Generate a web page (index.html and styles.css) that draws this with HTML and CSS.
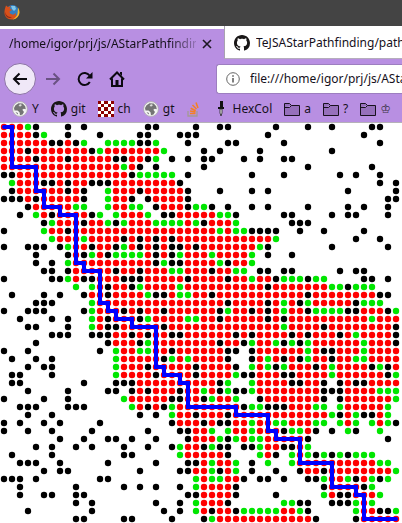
FILE: index.html
```
<!DOCTYPE html>
<html lang="en">
<head>
<meta charset="utf-8">
<title>AStarPathfinding</title>
<link rel="stylesheet" href="styles.css">
</head>
<body>
<svg class="defs" aria-hidden="true">
  <symbol id="github" viewBox="0 0 16 16">
    <path fill="#191717" d="M8 0C3.58 0 0 3.58 0 8c0 3.54 2.29 6.53 5.47 7.59.4.07.55-.17.55-.38 0-.19-.01-.82-.01-1.49-2.01.37-2.53-.49-2.69-.94-.09-.23-.48-.94-.82-1.13-.28-.15-.68-.52-.01-.53.63-.01 1.08.58 1.23.82.72 1.21 1.87.87 2.33.66.07-.52.28-.87.51-1.07-1.78-.2-3.64-.89-3.64-3.95 0-.87.31-1.59.82-2.15-.08-.2-.36-1.02.08-2.12 0 0 .67-.21 2.2.82.64-.18 1.32-.27 2-.27s1.36.09 2 .27c1.53-1.04 2.2-.82 2.2-.82.44 1.1.16 1.92.08 2.12.51.56.82 1.27.82 2.15 0 3.07-1.87 3.75-3.65 3.95.29.25.54.73.54 1.48 0 1.07-.01 1.93-.01 2.2 0 .21.15.46.55.38A8.01 8.01 0 0 0 16 8c0-4.42-3.58-8-8-8z"/>
  </symbol>
  <symbol id="globe" viewBox="0 0 16 16">
    <circle cx="8" cy="8" r="7.4" fill="#f4f4f4" stroke="#aaa" stroke-width=".8"/>
    <path fill="#747474" d="M2 7 3.500 4.200l3-2 4.200.3 2.500 2.700.6 3-2-.5-1.500 1L12 11l-1.500 2.500-2.500.8-.5-3L5.500 9.500 2.500 9.500zM3.500 11l2.500 1-.5 1.500z"/>
    <path fill="#ddd" d="M8 3l2 1-1.500 1.500L6.500 5z"/>
  </symbol>
  <symbol id="folder" viewBox="0 0 16 16">
    <path fill="#9670bb" stroke="#17111d" d="M.5 14.500V2.500h5l2 2h8v10zM.5 6.500h5l2-2"/>
  </symbol>
</svg>
<header class="browser">
  <div class="titlebar">
    <svg width="16" height="16" viewBox="0 0 16 16" aria-hidden="true">
      <circle cx="8.500" cy="7.500" r="6.500" fill="#347fc0"/>
      <path fill="#7fc6e8" d="M7 2l4 0 1 3-2 2-2-2z"/>
      <path fill="#d8501a" d="M2 1.500 4 3l3-1-1.500 2.500L8 6 5.500 7.500 6 9.500l3 1.200 3-1.700-.5 3 2.500-1 1.200-4.500C16 12 12.500 15.500 8 15.500 3 15.500 0 12 .5 7.500.7 5 1.300 3.500 2 1.500z"/>
      <path fill="#f5b52c" d="M14 3.500c2 3 2 6.500 0 9-1.500 2-3.500 2.800-5.500 3 3-1.500 5-4 5.200-7z"/>
      <path fill="#8d2c18" d="M1 8c1 4 4 5.500 7 5-3 2.500-7 0-7-5z"/>
    </svg>
  </div>
  <nav class="tabs">
    <div class="tab tab-first">
      <span class="tab-title fade">/home/igor/prj/js/AStarPathfinding</span>
      <button class="close" aria-label="Close tab"><svg width="10" height="10" viewBox="0 0 10 10"><path d="M1 1l8 8M9 1l-8 8" stroke="#1d1723" stroke-width="1.600"/></svg></button>
    </div>
    <div class="tab tab-second">
      <svg width="16" height="16" aria-hidden="true"><use href="#github"/></svg>
      <span class="tab-title">TeJSAStarPathfinding/path</span>
    </div>
  </nav>
  <div class="toolbar">
    <button class="tool back" aria-label="Back"><svg width="16" height="16" viewBox="0 0 16 16"><path d="M15 8H2M7.500 2.500 2 8l5.500 5.500"/></svg></button>
    <button class="tool forward" aria-label="Forward"><svg width="16" height="16" viewBox="0 0 16 16"><path d="M1 8h13M8.500 2.500 14 8l-5.500 5.500"/></svg></button>
    <button class="tool" aria-label="Reload"><svg width="16" height="16" viewBox="0 0 16 16"><path d="M12.800 11A6 6 0 1 1 12.500 4.500"/><path class="solid" d="M15.500 1v6.500H9z"/></svg></button>
    <button class="tool" aria-label="Home"><svg width="16" height="16" viewBox="0 0 16 16"><path d="M1 8.500 8 1.500l7 7M3 7.500V15h10V7.500"/><path class="solid" d="M6.500 9h3v6h-3zM11 1h2v4l-2-2z"/></svg></button>
    <div class="address">
      <svg width="14" height="14" viewBox="0 0 14 14" aria-hidden="true"><circle cx="7" cy="7" r="6.300" fill="none" stroke="#666"/><path d="M7 6v4.500M7 3.200v1.600" stroke="#555" stroke-width="1.500"/></svg>
      <input type="text" aria-label="Address" value="file:///home/igor/prj/js/AStarPathfinding/">
    </div>
  </div>
  <nav class="bookmarks">
    <a href="#"><svg width="16" height="16"><use href="#globe"/></svg>Y</a>
    <a href="#"><svg width="16" height="16"><use href="#github"/></svg>git</a>
    <a href="#"><svg width="16" height="16" viewBox="0 0 5 5" shape-rendering="crispEdges"><path fill="#fff" d="M0 0h5v5H0z"/><path fill="#8b0000" d="M0 0h1v1H0zM2 0h1v1H2zM4 0h1v1H4zM1 1h1v1H1zM3 1h1v1H3zM0 2h1v1H0zM2 2h1v1H2zM4 2h1v1H4zM1 3h1v1H1zM3 3h1v1H3zM0 4h1v1H0zM2 4h1v1H2zM4 4h1v1H4z"/></svg>ch</a>
    <a href="#"><svg width="16" height="16"><use href="#globe"/></svg>gt</a>
    <a href="#" aria-label="Questions"><svg width="14" height="16" viewBox="0 0 14 16"><path fill="none" stroke="#a49a94" stroke-width="1.300" d="M1 10v5h9v-5"/><path stroke="#f48024" stroke-width="1.600" d="M3 12.500h5.500M3 10l5.500 1M3.700 7.200l5 2.500M5.500 4l4 4M9 1.500l2 5.500"/></svg></a>
    <a href="#"><svg width="16" height="16" viewBox="0 0 16 16"><path fill="#111" d="M7 0h3v6h1v2H5V6h2z"/><path fill="#eee" stroke="#222" stroke-width=".8" d="M7 8h2v4l-1 3-1-3z"/></svg>HexCol</a>
    <a href="#"><svg width="16" height="16"><use href="#folder"/></svg>a</a>
    <a href="#"><svg width="16" height="16"><use href="#folder"/></svg>?</a>
    <a href="#"><svg width="16" height="16"><use href="#folder"/></svg><span class="king">♔</span></a>
  </nav>
</header>
<main>
  <svg id="board" class="board" width="400" height="400" viewBox="0 0 50 50" role="img" aria-label="Path found across the grid"></svg>
</main>
<script src="board.js"></script>
</body>
</html>
```
FILE: styles.css
```
* {
  box-sizing: border-box;
}

body {
  margin: 0;
  overflow: hidden;
  background: #fff;
  color: #15101b;
  font: 12px/16px "Noto Sans", "Open Sans", sans-serif;
}

svg {
  display: block;
  flex: none;
}

button {
  padding: 0;
  border: 0;
  background: none;
}

.defs {
  width: 0;
  height: 0;
  position: absolute;
}

.browser {
  background: #b88fe2;
  border-bottom: 1px solid #b5b1b8;
}

.titlebar {
  height: 26px;
  padding: 4px;
  background: #444;
}

.tabs {
  display: flex;
  height: 33px;
}

.tab {
  display: flex;
  align-items: center;
  white-space: nowrap;
  overflow: hidden;
}

.tab-first {
  flex: 0 0 224px;
  gap: 6px;
  padding-left: 9px;
  border-top: 3px solid #fff;
}

.tab-second {
  flex: 1;
  gap: 6px;
  padding: 2px 0 0 9px;
  background: #fff;
  border-left: 1px solid #a9a2b0;
  border-bottom: 1px solid #b5adbc;
}

.tab-title {
  overflow: hidden;
}

.fade {
  width: 187px;
  mask-image: linear-gradient(to right, #000 160px, rgb(0 0 0 / 20%));
}

.toolbar {
  display: flex;
  align-items: center;
  height: 40px;
  padding-left: 4px;
}

.tool {
  display: grid;
  place-items: center;
  width: 32px;
  height: 32px;
}

.tool path {
  fill: none;
  stroke: #0c0910;
  stroke-width: 2;
}

.tool .solid {
  fill: #0c0910;
  stroke: none;
}

.back {
  margin-right: 1px;
  border: 1px solid #8c72a6;
  border-radius: 50%;
  background: #f0e8f8;
}

.forward {
  opacity: 0.45;
}

.address {
  display: flex;
  flex: 1;
  align-items: center;
  gap: 10px;
  min-width: 0;
  height: 30px;
  margin-left: 83px;
  padding-left: 9px;
  background: #fff;
  border: 1px solid #9d7ec0;
  border-right: 0;
  border-radius: 3px 0 0 3px;
}

.address input {
  flex: 1;
  min-width: 0;
  padding: 0;
  border: 0;
  outline: 0;
  background: none;
  color: inherit;
  font: inherit;
}

.bookmarks {
  display: flex;
  align-items: center;
  gap: 12px;
  height: 23px;
  padding: 0 0 3px 12px;
}

.bookmarks a {
  display: flex;
  align-items: center;
  gap: 4px;
  color: inherit;
  text-decoration: none;
}

.king {
  color: #3d3447;
  font-family: "DejaVu Sans", sans-serif;
}

.open {
  fill: #00e600;
}

.closed {
  fill: #f00;
}

.wall {
  fill: #000;
}

.route {
  fill: none;
  stroke: #00f;
  stroke-width: 0.5;
  stroke-linecap: round;
}
```
FILE: board.js
```
// r = closed cell, g = open cell, # = wall; each row is split at column 25
const rows = [
  "rrrg#...#.#.......##....# ..##.....#...#..#....##",
  "rrrr#g..#...#....##...### ........#...........#",
  "rrrrrr##r#g..gggg##g...#. ...##.....#...........#",
  "rrr#rrrrrrr#grrrrrrrg.... #.#....#........#",
  "rrrr#rrr#rrrrr##rr#g.#.#. ##...#.#..##",
  "rrrrrrrrrrrrrrrgr#.#..... #............#.......#",
  "##rrrrrrrrrrrrrr#ggggg.#. ......#...#......#.#..#",
  ".grrr##r#rr###rrrrrrrr#.. ......................#.#",
  ".#rrrrrr#r#..grrr#rrrrr#. ..#...#.#.........#.....#",
  "###r#rrrrr#..grr#.#rrrr#. .......................##",
  "...#rrrrrgg..grrgg.#rrr#g g#.#..#.#....#....#.#..#",
  "..#.gr#rrrr#g.grrrg.##rrr rrgg#.....##....#.##...#",
  ".....#grrr#rrg#grrrggggrg #rrrg......###",
  "#....grr#rrrrrrrrrrrrrrrr rrgrgg####..#..#....#",
  "......grrrgrrrr#r#r#r#rrr rrrrrrrrrg.........#..#",
  "#..###.#grr#rr#gr#r#r##r# rrrrrrrg#.......#......#",
  "....#...#r#gr#ggggr#r#grr rgrrrrg.#..#",
  "....#.#.grrrrrrrrrr#g##rr rrg#rrg",
  ".....##.#rrrrr#rr#rrrggrr r#rrgg.##.##.....#.##",
  "#.....##gr##rrr###rrrrr#r rrr#rrgrr#ggg#gg....##.#",
  ".........g.gr#rr#grrrrgrr rrrrrrrr#rrrrrrrgg#ggg",
  ".#...#.#..#rr#rrrrg##rggr r#rrrrrrrrrrr#rrrrrrrr##",
  "....###....grrrrrrrrrrrrr rrr#rrrr#rgr#grrrrr#ggg",
  "#..###....#grrr#r#rr#rrrr rr#grr#r#rgrr#gggg##rrr#g",
  "..#...#.#..gr#rrr#grrrrgg rr#rrrrr#r#rrrrrrrrrrgrrr",
  "...##...#..gr##rrrrr#rrrr rrrrrrrrrrgrrrr#rrrrrrrr#",
  "......###..###rr#r#rr##rr rrrr#r#rrrr#r#rrr#rgrrrr#",
  "....#........#rrr#grrrrrr rr#rr#grrg#g#grrrrrrgrrr#",
  "#..#........#.grrggrr#rrr rrr##.#rrrrrrgr##rrrgrrrr",
  ".#..#.#.......grrrrr#grgr rrr#..#rgr#r#grr#rrggrrrr",
  "...#.##.......grrr#rrrrr# rrrr#.grg#grrr#rgrrrr#g#r",
  ".##...#.......grrrr#rrrr# rrrrg##rrr##rrrrgrrrrrr#g",
  ".##.......#...###rrrrrrrr rr#g..grrrr##rr#.#r##rrrr",
  "...#....#....##.#r#rrr#rr gr#g##grrrrrrrr###rrrrggg",
  "#....#..#......grrrrr##rr #grrg..#rrrrrrr#.#rrrrrrg",
  "..###...###.....gr#r#grrr rrrrr#gg###rrrgg.grrrrrg",
  "...#..#..........#.#.grr# rrr#rrrrrrrrrrrrg#rg##rg",
  "#.#..#.#....#........#rrr #r##rrgrrggrrrgg.grg.grg#",
  "#..#..#....#......#...##r rg.grrgrrr#ggr#.#.g#..g",
  ".......#..#..##.#..#...#r rrg#grggrrrrr#.........#",
  "....#.#..#.#...#..#..#grr #g##.##grr##rg",
  ".#....#........##.....grr rrr#...gr#.grg#g#g#ggg",
  "..###..#.....#.....#...## rgrrg.#.g..grrrrrrrrrrgg",
  ".....#.##........#....##r rg#rg.#..#..#rr#rrrrrrrrg",
  "###.#.......##..........g rggrr#.##.#..##grrg#rg#g",
  "..#......#.....#.#.#..#.g rrrr#..........#rrrr#g",
  "..#..##..##............## rrrr#....#.....gr##rrrg",
  ".........#.#.......#..#.g rrr#......gg##..###grg",
  "...#.......#........#.#.g r#rr#gggggrrg#.....grr##g",
  ".........##....##....#... #grrrrrrrrrrrr#....#rrrrr"
];
const kinds = { r: "closed", g: "open", "#": "wall" };

// Alternating horizontal and vertical stops of the route: H x, V y
const route = "M.5 .5H1.5V5.5H4.5V8.5H5.5V10.5H7.5V11.5H9.5V17.5H10.5V18.5H12.5V22.5H13.5V23.5H14.5V24.5H16.5V25.5H19.5V30.5H20.5V31.5H22.5V32.5H23.5V35.5H29.5V36.5H33.5V38.5H34.5V39.5H37.5V42.5H41.5V45.5H44.5V46.5H45.5V49.5H49.5";

const board = document.getElementById("board");
const ns = "http://www.w3.org/2000/svg";

function add(name, attributes) {
  const node = document.createElementNS(ns, name);
  for (const key in attributes) node.setAttribute(key, attributes[key]);
  board.appendChild(node);
}

rows.forEach((row, y) => {
  [...row.replace(" ", "")].forEach((cell, x) => {
    if (kinds[cell]) add("circle", { class: kinds[cell], cx: x + 0.5, cy: y + 0.5, r: 0.4 });
  });
});
add("path", { class: "route", d: route });
```
